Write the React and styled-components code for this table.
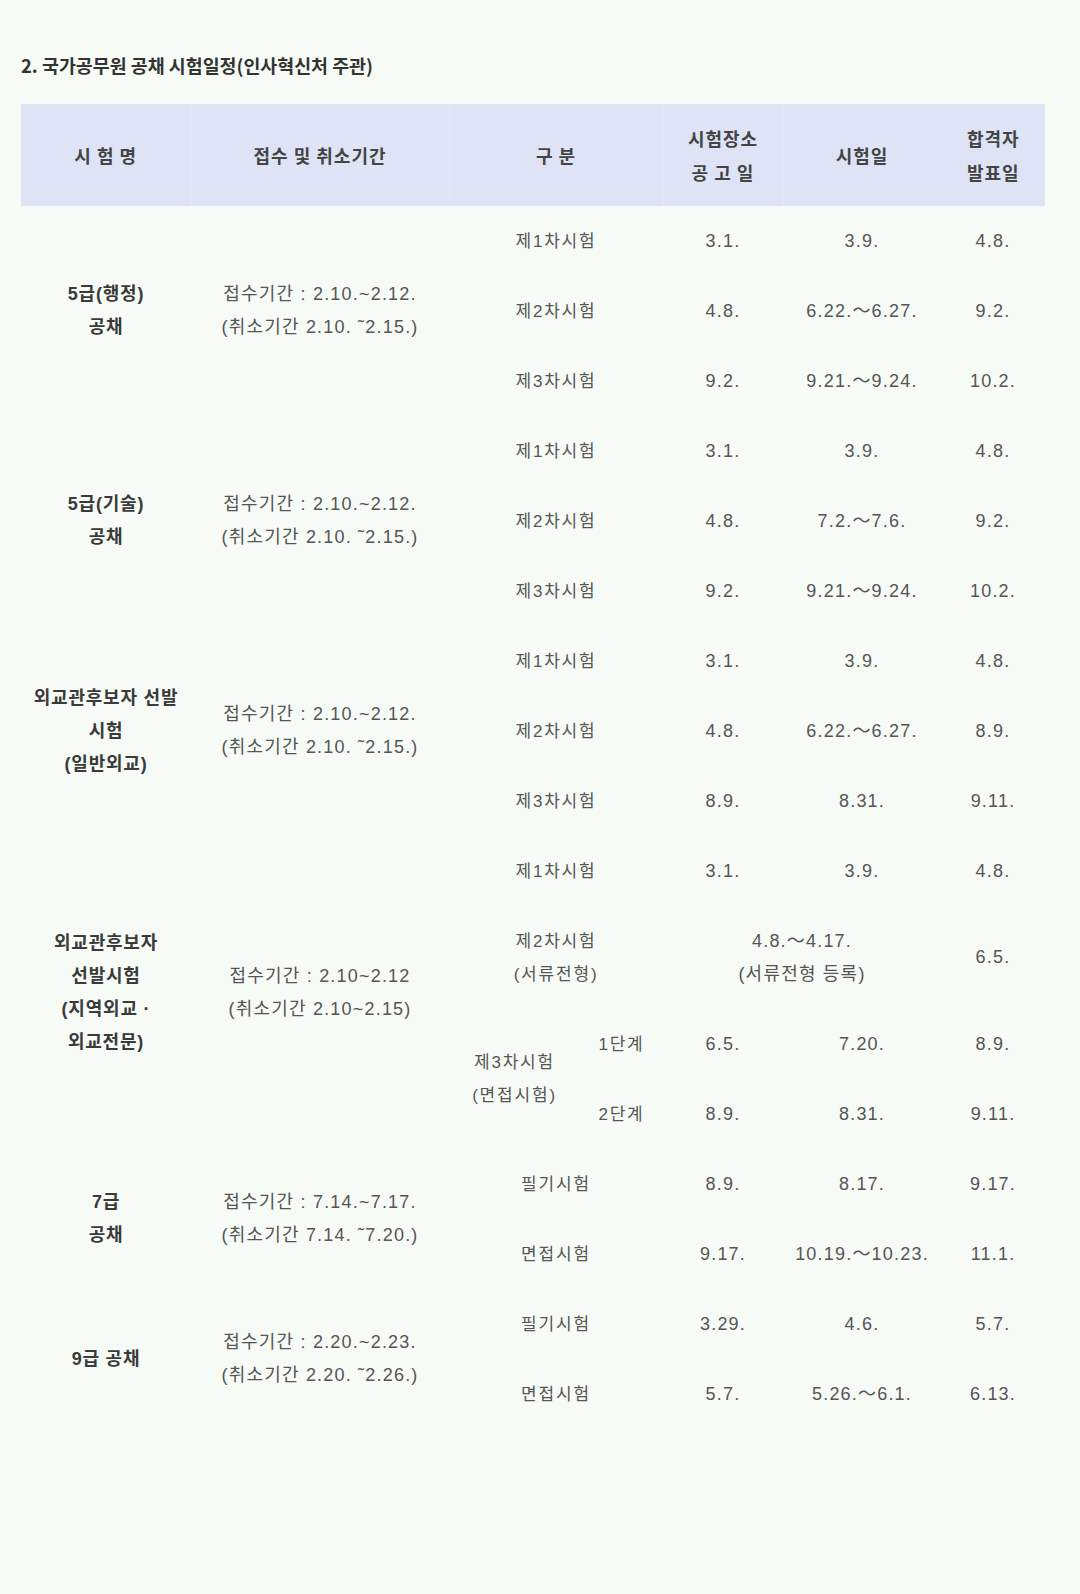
import styled, { createGlobalStyle } from 'styled-components';

const GlobalStyle = createGlobalStyle`
  html, body {
    margin: 0;
    padding: 0;
    background: #f6fbf5;
  }
  body {
    min-height: 1594px;
    font-family: "Liberation Sans", "Noto Sans CJK KR", sans-serif;
  }
`;

const groups = [
  {
    name: ['5급(행정)', '공채'],
    period: ['접수기간 : 2.10.~2.12.', '(취소기간 2.10. ˜2.15.)'],
    rows: [
      ['제1차시험', '3.1.', '3.9.', '4.8.'],
      ['제2차시험', '4.8.', '6.22.～6.27.', '9.2.'],
      ['제3차시험', '9.2.', '9.21.～9.24.', '10.2.'],
    ],
  },
  {
    name: ['5급(기술)', '공채'],
    period: ['접수기간 : 2.10.~2.12.', '(취소기간 2.10. ˜2.15.)'],
    rows: [
      ['제1차시험', '3.1.', '3.9.', '4.8.'],
      ['제2차시험', '4.8.', '7.2.～7.6.', '9.2.'],
      ['제3차시험', '9.2.', '9.21.～9.24.', '10.2.'],
    ],
  },
  {
    name: ['외교관후보자 선발', '시험', '(일반외교)'],
    period: ['접수기간 : 2.10.~2.12.', '(취소기간 2.10. ˜2.15.)'],
    rows: [
      ['제1차시험', '3.1.', '3.9.', '4.8.'],
      ['제2차시험', '4.8.', '6.22.～6.27.', '8.9.'],
      ['제3차시험', '8.9.', '8.31.', '9.11.'],
    ],
  },
];

const laterGroups = [
  {
    name: ['7급', '공채'],
    period: ['접수기간 : 7.14.~7.17.', '(취소기간 7.14. ˜7.20.)'],
    rows: [
      ['필기시험', '8.9.', '8.17.', '9.17.'],
      ['면접시험', '9.17.', '10.19.～10.23.', '11.1.'],
    ],
  },
  {
    name: ['9급 공채'],
    period: ['접수기간 : 2.20.~2.23.', '(취소기간 2.20. ˜2.26.)'],
    rows: [
      ['필기시험', '3.29.', '4.6.', '5.7.'],
      ['면접시험', '5.7.', '5.26.～6.1.', '6.13.'],
    ],
  },
];

const Lines = ({ items }) =>
  items.map((line, i) => (
    <span key={i}>
      {i > 0 && <br />}
      {line}
    </span>
  ));

const GroupRows = ({ group }) =>
  group.rows.map((row, i) => (
    <tr key={i}>
      {i === 0 && (
        <>
          <NameCell rowSpan={group.rows.length}>
            <Lines items={group.name} />
          </NameCell>
          <PeriodCell rowSpan={group.rows.length}>
            <Lines items={group.period} />
          </PeriodCell>
        </>
      )}
      <LabelCell colSpan={2}>{row[0]}</LabelCell>
      <DateCell>{row[1]}</DateCell>
      <DateCell>{row[2]}</DateCell>
      <DateCell>{row[3]}</DateCell>
    </tr>
  ));

export default function App() {
  return (
    <Page>
      <GlobalStyle />
      <Title>2. 국가공무원 공채 시험일정(인사혁신처 주관)</Title>
      <Table>
        <colgroup>
          <col style={{ width: 170 }} />
          <col style={{ width: 258 }} />
          <col style={{ width: 131 }} />
          <col style={{ width: 83 }} />
          <col style={{ width: 120 }} />
          <col style={{ width: 158 }} />
          <col style={{ width: 104 }} />
        </colgroup>
        <thead>
          <HeadRow>
            <HeadCell>시 험 명</HeadCell>
            <HeadCell>접수 및 취소기간</HeadCell>
            <HeadCell colSpan={2}>구 분</HeadCell>
            <HeadCell>
              시험장소
              <br />공 고 일
            </HeadCell>
            <HeadCell>시험일</HeadCell>
            <HeadCell>
              합격자
              <br />
              발표일
            </HeadCell>
          </HeadRow>
        </thead>
        <tbody>
          {groups.map((g, i) => (
            <GroupRows key={i} group={g} />
          ))}
          <tr>
            <NameCell rowSpan={4}>
              <Lines items={['외교관후보자', '선발시험', '(지역외교 ·', '외교전문)']} />
            </NameCell>
            <PeriodCell rowSpan={4}>
              <Lines items={['접수기간 : 2.10~2.12', '(취소기간 2.10~2.15)']} />
            </PeriodCell>
            <LabelCell colSpan={2}>제1차시험</LabelCell>
            <DateCell>3.1.</DateCell>
            <DateCell>3.9.</DateCell>
            <DateCell>4.8.</DateCell>
          </tr>
          <tr>
            <LabelCell colSpan={2}>
              <Lines items={['제2차시험', '(서류전형)']} />
            </LabelCell>
            <DateCell colSpan={2}>
              <Lines items={['4.8.～4.17.', '(서류전형 등록)']} />
            </DateCell>
            <DateCell>6.5.</DateCell>
          </tr>
          <tr>
            <LabelCell rowSpan={2}>
              <Lines items={['제3차시험', '(면접시험)']} />
            </LabelCell>
            <LabelCell>1단계</LabelCell>
            <DateCell>6.5.</DateCell>
            <DateCell>7.20.</DateCell>
            <DateCell>8.9.</DateCell>
          </tr>
          <tr>
            <LabelCell>2단계</LabelCell>
            <DateCell>8.9.</DateCell>
            <DateCell>8.31.</DateCell>
            <DateCell>9.11.</DateCell>
          </tr>
          {laterGroups.map((g, i) => (
            <GroupRows key={i} group={g} />
          ))}
        </tbody>
      </Table>
    </Page>
  );
}

const Page = styled.div`
  padding: 52px 0 0 21px;
`;

const Title = styled.h2`
  margin: 0 0 26px;
  font-family: "Noto Sans CJK KR", sans-serif;
  font-size: 18.4px;
  line-height: 26px;
  font-weight: 700;
  color: #333;
`;

const Table = styled.table`
  width: 1024px;
  table-layout: fixed;
  border-collapse: collapse;
  border-spacing: 0;
`;

const HeadRow = styled.tr`
  height: 102px;
  background: #dfe3f6;
`;

const HeadCell = styled.th`
  padding: 0;
  font-family: "Noto Sans CJK KR", sans-serif;
  font-size: 18px;
  line-height: 34px;
  font-weight: 700;
  letter-spacing: 1px;
  color: #444;
  text-align: center;
  vertical-align: middle;
  border-left: 1px solid #e4e7f7;
  &:first-child {
    border-left: none;
  }
`;

const Cell = styled.td`
  padding: 18.5px 2px;
  font-size: 17px;
  line-height: 33px;
  letter-spacing: 1.2px;
  color: #555;
  text-align: center;
  vertical-align: middle;
`;

const NameCell = styled(Cell)`
  font-size: 18px;
  font-weight: 700;
  color: #3a3a3a;
  letter-spacing: 0.8px;
  padding-left: 8px;
  padding-right: 8px;
`;

const PeriodCell = styled(Cell)`
  font-size: 18px;
  letter-spacing: 1.2px;
`;

const LabelCell = styled(Cell)`
  letter-spacing: 1.8px;
`;

const DateCell = styled(Cell)`
  font-size: 18px;
`;
